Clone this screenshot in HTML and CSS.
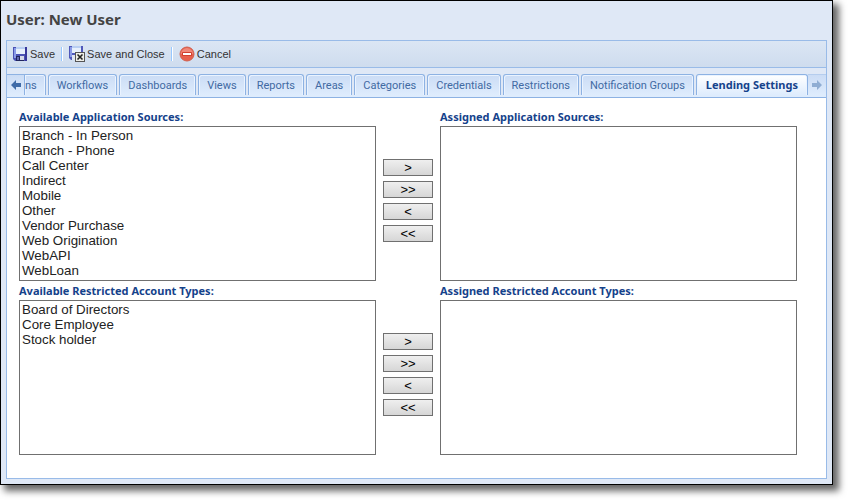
FILE: index.html
```
<!DOCTYPE html>
<html lang="en">
  <head>
    <meta charset="utf-8" />
    <title>User: New User</title>
    <link rel="stylesheet" href="styles.css">
  </head>
  <body>
    <div class="window">
      <h1>User: New User</h1>
      <div class="panel">
        <div class="toolbar">
          <button type="button">
            <svg width="16" height="16" viewBox="0 0 16 16">
              <path d="M1 1h14v14H3l-2-2z" fill="#4a52b4"/>
              <path d="M2 2h2v10H2z" fill="#8a9be8"/>
              <path d="M4 1h9v7H4z" fill="#e6effc"/>
              <path d="M4 1h9v2H4z" fill="#b8cef2"/>
              <path d="M13 1h2v14h-2z" fill="#37379a"/>
              <path d="M4 10h8v5H4z" fill="#22265e"/>
              <path d="M8 10h4v4H8z" fill="#d4d9e8"/>
              <path d="M5 11h2v3H5z" fill="#6169b0"/>
            </svg>
            Save
          </button>
          <span class="sep"></span>
          <button type="button">
            <svg width="16" height="16" viewBox="0 0 16 16">
              <path d="M0 0h14v14H2l-2-2z" fill="#4f58ba"/>
              <path d="M1 1h2v10H1z" fill="#8a9be8"/>
              <path d="M3 0h9v7H3z" fill="#e6effc"/>
              <path d="M3 0h9v2H3z" fill="#b8cef2"/>
              <path d="M3 9h5v5H3z" fill="#dfe5f2"/>
              <path d="M6 6h10v10H6z" fill="#555"/>
              <path d="M7 7h8v8H7z" fill="#eeeee8"/>
              <path d="M8.500 8.500l5 5M13.500 8.500l-5 5" stroke="#222" stroke-width="1.600"/>
            </svg>
            Save and Close
          </button>
          <span class="sep"></span>
          <button type="button">
            <svg width="16" height="16" viewBox="0 0 16 16">
              <circle cx="8" cy="8" r="7" fill="#e8604c" stroke="#d0604f"/>
              <path d="M2 8a6 6 0 0 1 12 0z" fill="#f0897a"/>
              <rect x="3" y="6" width="10" height="4" rx="1" fill="#d0402f"/>
              <rect x="4" y="7" width="8" height="2" fill="#fff"/>
            </svg>
            Cancel
          </button>
        </div>

        <div class="tabbar">
          <button type="button" class="scroller left" aria-label="Scroll tabs left">
            <svg width="10" height="10" viewBox="0 0 10 10"><path d="M0 5l5-5v3h5v4H5v3z" fill="#3f6ba8"/></svg>
          </button>
          <div class="tabs" role="tablist">
            <button type="button" role="tab" class="partial">ns</button>
            <button type="button" role="tab">Workflows</button>
            <button type="button" role="tab">Dashboards</button>
            <button type="button" role="tab">Views</button>
            <button type="button" role="tab">Reports</button>
            <button type="button" role="tab">Areas</button>
            <button type="button" role="tab">Categories</button>
            <button type="button" role="tab">Credentials</button>
            <button type="button" role="tab">Restrictions</button>
            <button type="button" role="tab">Notification Groups</button>
            <button type="button" role="tab" class="active" aria-selected="true">Lending Settings</button>
          </div>
          <button type="button" class="scroller right" aria-label="Scroll tabs right" disabled>
            <svg width="10" height="10" viewBox="0 0 10 10"><path d="M10 5L5 0v3H0v4h5v3z" fill="#8fadd3"/></svg>
          </button>
        </div>

        <div class="content">
          <div class="picker">
            <div class="list">
              <label for="availSources">Available Application Sources:</label>
              <select id="availSources" size="10" multiple>
                <option>Branch - In Person</option>
                <option>Branch - Phone</option>
                <option>Call Center</option>
                <option>Indirect</option>
                <option>Mobile</option>
                <option>Other</option>
                <option>Vendor Purchase</option>
                <option>Web Origination</option>
                <option>WebAPI</option>
                <option>WebLoan</option>
              </select>
            </div>
            <div class="move">
              <button type="button">&gt;</button>
              <button type="button">&gt;&gt;</button>
              <button type="button">&lt;</button>
              <button type="button">&lt;&lt;</button>
            </div>
            <div class="list">
              <label for="assignedSources">Assigned Application Sources:</label>
              <select id="assignedSources" size="10" multiple></select>
            </div>
          </div>

          <div class="picker">
            <div class="list">
              <label for="availTypes">Available Restricted Account Types:</label>
              <select id="availTypes" size="10" multiple>
                <option>Board of Directors</option>
                <option>Core Employee</option>
                <option>Stock holder</option>
              </select>
            </div>
            <div class="move">
              <button type="button">&gt;</button>
              <button type="button">&gt;&gt;</button>
              <button type="button">&lt;</button>
              <button type="button">&lt;&lt;</button>
            </div>
            <div class="list">
              <label for="assignedTypes">Assigned Restricted Account Types:</label>
              <select id="assignedTypes" size="10" multiple></select>
            </div>
          </div>
        </div>
      </div>
    </div>
  </body>
</html>
```
FILE: styles.css
```
* {
    box-sizing: border-box; }

body {
    margin: 0;
    padding: 0 15px 15px 0;
    background: #fff;
    font-family: "Noto Sans", Tahoma, sans-serif;
    font-size: 11px; }

button {
    margin: 0;
    padding: 0;
    border: none;
    background: none;
    font: inherit;
    color: inherit;
    white-space: nowrap; }

.window {
    padding: 0 5px 5px;
    border: 1px solid #000;
    background: #dfe8f6;
    box-shadow: 5px 5px 7px 1px rgba(0, 0, 0, 0.6); }

h1 {
    margin: 0;
    padding: 8px 0 11px;
    color: #444;
    font-size: 15px;
    line-height: 20px; }

.panel {
    border: 1px solid #99bbe8; }

/* toolbar */
.toolbar {
    display: flex;
    align-items: center;
    gap: 6px;
    height: 27px;
    padding: 0 5px;
    border-bottom: 1px solid #99bbe8;
    background: linear-gradient(#dbe6f4, #cedcee);
    color: #333;
    font-family: "Liberation Sans", Arial, sans-serif; }

.toolbar button {
    display: flex;
    align-items: center;
    gap: 2px; }

.sep {
    width: 2px;
    height: 14px;
    border-left: 1px solid #98c8ff;
    border-right: 1px solid #fff; }

/* tabs */
.tabbar {
    display: flex;
    padding-top: 6px;
    border-bottom: 1px solid #8db2e3;
    background: linear-gradient(#dfe8f6 27px, #deecfd 27px); }

.tabs {
    display: flex;
    flex: 1;
    justify-content: flex-end;
    gap: 2px;
    min-width: 0;
    margin-bottom: 2px;
    overflow: hidden; }

.tabs button {
    flex: none;
    height: 21px;
    padding: 0 8px;
    border: 1px solid #8db2e3;
    border-bottom: none;
    border-radius: 3px 3px 0 0;
    background: linear-gradient(#cbdcf5, #deecfd);
    box-shadow: inset 1px 1px #eaf3ff, inset -1px 0 #eaf3ff;
    color: #416aa3;
    font-family: Roboto, sans-serif; }

/* scrolled partly under the left arrow */
.tabs button.partial {
    flex: 1;
    padding-left: 0;
    border-left: none;
    border-radius: 0 3px 0 0;
    text-align: right; }

.tabs button.active {
    padding: 0 9px 2px;
    background: linear-gradient(#fff, #deecfd);
    color: #15428b;
    font-family: "Noto Sans", Tahoma, sans-serif;
    font-weight: bold; }

.scroller {
    display: flex;
    align-items: center;
    justify-content: center;
    width: 18px;
    height: 21px;
    border-top: 1px solid #8db2e3;
    background: linear-gradient(#cbdcf5, #deecfd); }

.scroller.left {
    border-right: 1px solid #8db2e3; }

.scroller.right {
    border-color: #b5cdee; }

/* list pickers */
.content {
    padding: 12px 29px 23px 12px;
    background: #fff; }

.picker {
    display: grid;
    grid-template-columns: 1fr 50px 1fr;
    column-gap: 7px; }

.picker + .picker {
    margin-top: 3px; }

.list {
    display: flex;
    flex-direction: column; }

.list label {
    height: 16px;
    color: #15428b;
    font-weight: bold;
    line-height: 14px; }

.list select {
    width: 100%;
    height: 155px;
    padding: 1px 0;
    border: 1px solid #707070;
    border-radius: 0;
    background: #fff;
    color: #222;
    font-family: "Liberation Sans", Arial, sans-serif;
    overflow: hidden; }

.list option {
    min-height: 15px;
    padding: 0 2px;
    line-height: 15px; }

.move {
    display: flex;
    flex-direction: column;
    gap: 5px;
    padding-top: 49px; }

.move button {
    height: 17px;
    border: 1px solid #707070;
    background: linear-gradient(#efefef, #d6d6d6);
    color: #000;
    font-family: "Liberation Sans", Arial, sans-serif;
    font-size: 13px;
    line-height: 15px; }
```
